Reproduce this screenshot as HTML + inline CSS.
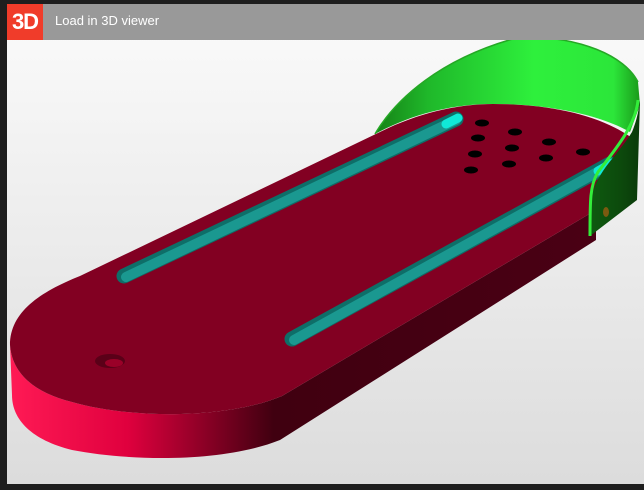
<!DOCTYPE html>
<html><head><style>
body{margin:0;width:644px;height:490px;background:#1e1e1e;overflow:hidden;font-family:"Liberation Sans",sans-serif}
#v{position:absolute;left:7px;top:4px;width:637px;height:480px;background:linear-gradient(#fbfbfb,#dcdcdc)}
#h{position:absolute;left:7px;top:4px;width:637px;height:36px;background:#999}
#b{position:absolute;left:7px;top:4px;width:36px;height:36px;background:#f03c2a;color:#fff;font:bold 22px "Liberation Sans",sans-serif;text-align:center;line-height:36px;letter-spacing:-1px}
#t{position:absolute;left:55px;top:13px;color:#fff;font-size:13px}
svg{position:absolute;left:0;top:0}
</style></head><body>
<div id="v"></div>
<svg width="644" height="490">
<defs>
<linearGradient id="s" x1="0" x2="1"><stop offset="0" stop-color="#ff1a55"/><stop offset=".2" stop-color="#e0003e"/><stop offset=".45" stop-color="#400010"/><stop offset="1" stop-color="#4a0014"/></linearGradient>
<linearGradient id="g" x1="375" x2="640" gradientUnits="userSpaceOnUse"><stop offset="0" stop-color="#168016"/><stop offset=".2" stop-color="#1fb82a"/><stop offset=".6" stop-color="#2ef03c"/><stop offset=".9" stop-color="#2ce63a"/><stop offset="1" stop-color="#1a9a1a"/></linearGradient>
<linearGradient id="d" x1="590" x2="640" gradientUnits="userSpaceOnUse"><stop offset="0" stop-color="#0e5a10"/><stop offset=".6" stop-color="#0c4a0c"/><stop offset="1" stop-color="#0a3a0a"/></linearGradient>
</defs>
<path d="M375 134 C395 100 440 58 520 37 C580 36 625 56 638 82 L640 105 L630 132 C600 115 550 104 493 104 C450 104 410 115 375 134 Z" fill="url(#g)"/>
<path d="M375 134 C395 100 440 58 520 37 C580 36 625 56 638 82" fill="none" stroke="#25a825" stroke-width="1.5"/>
<path d="M10 345 C12 372 32 392 72 402 C135 420 230 418 282 396 L596 210 L596 240 L280 440 C225 462 135 462 72 450 C32 440 12 420 12 395 Z" fill="url(#s)"/>
<path d="M10 345 C10 312 40 292 80 276 L380 132 C420 112 460 104 493 104 C550 104 600 115 632 138 L596 210 L282 396 C230 418 135 420 72 402 C32 392 12 372 10 345 Z" fill="#820022"/>
<line x1="124" y1="276" x2="456" y2="119" stroke="#0e6e68" stroke-width="15" stroke-linecap="round"/>
<line x1="126" y1="277" x2="456" y2="120" stroke="#1a9890" stroke-width="10" stroke-linecap="round"/>
<line x1="446" y1="124" x2="458" y2="118" stroke="#10e8d8" stroke-width="9" stroke-linecap="round"/>
<line x1="292" y1="339" x2="610" y2="164" stroke="#0e6e68" stroke-width="15" stroke-linecap="round"/>
<line x1="294" y1="340" x2="610" y2="165" stroke="#1a9890" stroke-width="10" stroke-linecap="round"/>
<line x1="598" y1="171" x2="612" y2="163" stroke="#10e8d8" stroke-width="9" stroke-linecap="round"/>
<ellipse cx="110" cy="361" rx="15" ry="7" fill="#5a0018"/>
<ellipse cx="114" cy="363" rx="9" ry="4" fill="#9a0028"/>
<g fill="#000">
<ellipse cx="482" cy="123" rx="7" ry="3.5"/><ellipse cx="515" cy="132" rx="7" ry="3.5"/><ellipse cx="478" cy="138" rx="7" ry="3.5"/>
<ellipse cx="549" cy="142" rx="7" ry="3.5"/><ellipse cx="512" cy="148" rx="7" ry="3.5"/><ellipse cx="475" cy="154" rx="7" ry="3.5"/>
<ellipse cx="583" cy="152" rx="7" ry="3.5"/><ellipse cx="546" cy="158" rx="7" ry="3.5"/><ellipse cx="509" cy="164" rx="7" ry="3.5"/><ellipse cx="471" cy="170" rx="7" ry="3.5"/>
</g>
<path d="M632 132 C618 155 598 170 592 195 L590 236 L637 200 L640 100 C638 115 636 122 632 132 Z" fill="url(#d)"/>
<path d="M638 100 C636 125 615 150 598 172 C590 185 590 200 590 236" fill="none" stroke="#33ee3a" stroke-width="3"/>
<ellipse cx="606" cy="212" rx="3" ry="5" fill="#7a5a10"/>
</svg>
<div id="h"></div><div id="b">3D</div><div id="t">Load in 3D viewer</div>
</body></html>
